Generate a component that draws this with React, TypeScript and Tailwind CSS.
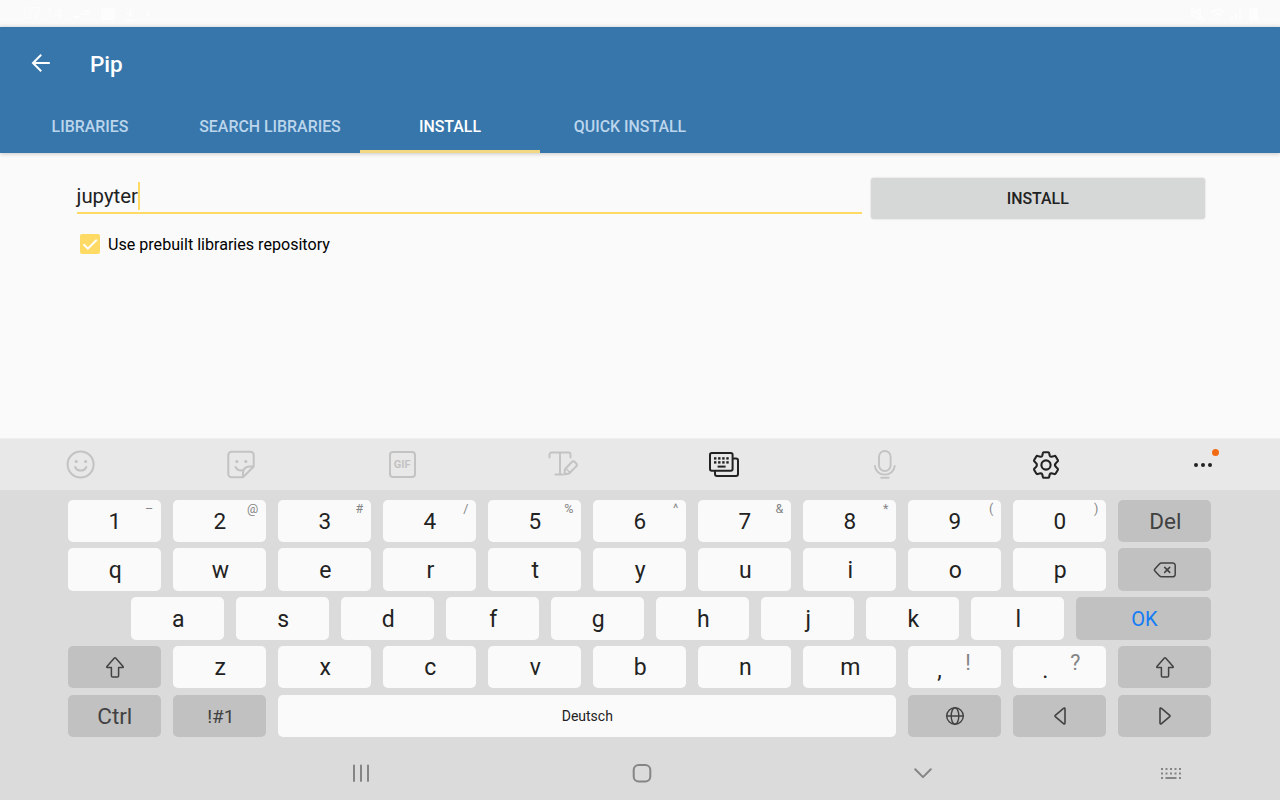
import React from 'react';
import type { ReactNode } from 'react';

const line = {
  fill: 'none',
  stroke: 'currentColor',
  strokeLinecap: 'round' as const,
  strokeLinejoin: 'round' as const,
};

function Icon({ w, h, sw = 2, children }: { w: number; h: number; sw?: number; children: ReactNode }) {
  return (
    <svg width={w} height={h} viewBox={`0 0 ${w} ${h}`} {...line} strokeWidth={sw} className="block shrink-0">
      {children}
    </svg>
  );
}

const Smiley = () => (
  <Icon w={30} h={30}>
    <circle cx="15.600" cy="14.500" r="13" />
    <circle cx="11.2" cy="11.5" r="1.6" fill="currentColor" stroke="none" />
    <circle cx="20.6" cy="11.5" r="1.6" fill="currentColor" stroke="none" />
    <path d="M10.1 17c1 2.3 3 3.6 5.600 3.600s4.600-1.300 5.600-3.600" />
  </Icon>
);

const Sticker = () => (
  <Icon w={30} h={30}>
    <path d="M27.700 16.500V5a3.200 3.200 0 0 0-3.200-3.200H5.500A3.200 3.200 0 0 0 2.300 5v19a3.200 3.200 0 0 0 3.200 3.200H17L27.700 16.500h-4.500a6.200 6.200 0 0 0-6.200 6.200v4.500" />
    <circle cx="10.900" cy="11.500" r="1.600" fill="currentColor" stroke="none" />
    <circle cx="19.800" cy="11.500" r="1.600" fill="currentColor" stroke="none" />
    <path d="M9.500 17c1.200 2.300 3 3.500 5.500 3.500 1 0 1.800-.2 2.600-.6" />
  </Icon>
);

const TextEdit = () => (
  <Icon w={32} h={30}>
    <path d="M2.500 7.500V4.500a2 2 0 0 1 2-2h17a2 2 0 0 1 2 2v3M13 2.500v22M8.500 24.500H16" strokeWidth={1.900} />
    <path d="M17.800 24.300v-4.200c0-.5.200-1 .6-1.400l6.400-6.700c.8-.9 2.200-.9 3 0l1.400 1.400c.8.900.8 2.200 0 3l-6.600 6.600c-.4.400-.8.700-1.400.8z" />
    <path d="M19.200 18.800l3.600 3.700" strokeWidth={1.300} />
  </Icon>
);

const Keyboards = () => (
  <Icon w={32} h={28}>
    <path d="M25.500 7.500h2.500a2 2 0 0 1 2 2V23a2 2 0 0 1-2 2H9a2 2 0 0 1-2-2v-2.500" />
    <rect x="2" y="2" width="22.600" height="17.800" rx="1.800" />
    <g fill="currentColor" stroke="none">
      {[6, 10.1, 14.2, 18.3].map((x) => (
        <g key={x}>
          <rect x={x} y="6.200" width="2.400" height="2.400" />
          <rect x={x} y="10.200" width="2.400" height="2.400" />
        </g>
      ))}
      <rect x="9.600" y="14.600" width="8" height="2" />
    </g>
  </Icon>
);

const Mic = () => (
  <Icon w={24} h={30} sw={1.9}>
    <rect x="6" y="1" width="11.600" height="20" rx="5.800" />
    <path d="M1.900 16c.5 5 4.600 8.600 9.900 8.600s9.400-3.600 9.900-8.600M8.200 27.800h7.400" />
  </Icon>
);

const Gear = () => (
  <Icon w={30} h={30} sw={2.100}>
    <circle cx="15" cy="15" r="4.600" />
    <path d="M12.900 2.200h4.200c.6 0 1 .4 1.100 1l.5 2.300c.2.800.9 1.300 1.700 1.200l3-.7c.6-.2 1 0 1.300.5l2.100 3.500c.3.500.2 1-.2 1.400l-1.800 1.900c-.9.900-.9 2.500 0 3.400l1.800 1.900c.4.400.5.900.2 1.400l-2.100 3.500c-.3.500-.7.700-1.300.5l-3-.7c-.8-.1-1.500.4-1.700 1.200l-.5 2.300c-.1.600-.5 1-1.100 1h-4.200c-.6 0-1-.4-1.100-1l-.5-2.300c-.2-.8-.9-1.300-1.700-1.200l-3 .7c-.6.200-1 0-1.300-.5l-2.100-3.500c-.3-.5-.2-1 .2-1.400l1.800-1.900c.9-.9.900-2.500 0-3.400l-1.800-1.900c-.4-.4-.5-.9-.2-1.400l2.100-3.500c.3-.5.7-.7 1.300-.5l3 .7c.8.100 1.500-.4 1.700-1.200l.5-2.300c.1-.6.500-1 1.100-1z" />
  </Icon>
);

const Shift = () => (
  <Icon w={22} h={24} sw={1.500}>
    <path d="M10.400 3L2.900 11.600c-.4.500-.2.900.4.900h4.100v8.200c0 .9.400 1.300 1.300 1.300h4.600c.9 0 1.300-.4 1.300-1.300v-8.200h4.100c.6 0 .8-.4.400-.9L11.600 3c-.4-.4-.8-.4-1.200 0z" />
  </Icon>
);

const Backspace = () => (
  <Icon w={24} h={18} sw={1.500}>
    <path d="M8.600 2h11.200A2.400 2.400 0 0 1 22.200 4.400v9a2.400 2.400 0 0 1-2.400 2.400H8.600a3 3 0 0 1-2.200-1L1.900 9.900a1.500 1.500 0 0 1 0-2L6.400 3a3 3 0 0 1 2.200-1z" />
    <path d="M11.700 6.400l5 5m0-5l-5 5" />
  </Icon>
);

const Globe = () => (
  <Icon w={20} h={20} sw={1.400}>
    <circle cx="10" cy="10" r="8.300" />
    <ellipse cx="10" cy="10" rx="3.800" ry="8.300" />
    <path d="M1.700 10h16.600" />
  </Icon>
);

const Triangle = () => (
  <Icon w={16} h={20} sw={1.600}>
    <path d="M3.300 10.600l8.200 7c.9.700 1.500.400 1.500-.6V3c0-1-.6-1.300-1.500-.6l-8.200 7c-.4.400-.4.800 0 1.200z" />
  </Icon>
);

function Key({ children, hint, dark = false, size = 'w-[93px]', text = 'text-[23px]' }: {
  children: ReactNode; hint?: string; dark?: boolean; size?: string; text?: string;
}) {
  return (
    <div className={`relative flex h-[42.400px] shrink-0 items-center justify-center rounded-[5px] ${size} ${text} ${dark ? 'bg-[#c1c1c1] text-[#424242]' : 'bg-[#fafafa] text-[#222]'}`}>
      {children}
      {hint && <span className="absolute top-px right-[8px] text-[12.500px] leading-[16px] text-[#858585]">{hint}</span>}
    </div>
  );
}

const Cap = ({ children }: { children: ReactNode }) => <span className="pt-[3px] pl-px">{children}</span>;

function Punctuation({ mark, hint }: { mark: string; hint: string }) {
  return (
    <Key>
      <span className="absolute top-[11px] left-[29px] leading-[28px]">{mark}</span>
      <span className="absolute top-[3px] left-[57px] text-[21.500px] leading-[28px] text-[#858585]">{hint}</span>
    </Key>
  );
}

const numbers = [['1', '–'], ['2', '@'], ['3', '#'], ['4', '/'], ['5', '%'], ['6', '^'], ['7', '&'], ['8', '*'], ['9', '('], ['0', ')']];
const tabs = ['LIBRARIES', 'SEARCH LIBRARIES', 'INSTALL', 'QUICK INSTALL'];

function Slot({ children, dim = false }: { children: ReactNode; dim?: boolean }) {
  return <div className={`flex w-[160.900px] shrink-0 items-center justify-center ${dim ? 'text-[#c3c3c3]' : 'text-[#222]'}`}>{children}</div>;
}

function StatusBar() {
  return (
    <div className="flex h-[27px] items-center justify-between bg-[#fafafa] bg-linear-to-b from-[#fafafa] from-85% to-[#eeeff0] pr-[22px] pl-[23px] text-[#fdfdfd]">
      <div className="flex items-center gap-[10px]">
        <span className="text-[16px] leading-[20px]">07:14</span>
        <Icon w={18} h={12}><path d="M1 9h5M8 6h8M12 3h4" /></Icon>
        <Icon w={14} h={12}><rect x="1" y="1" width="12" height="10" fill="currentColor" /></Icon>
        <Icon w={10} h={14}><path d="M5 1v8M2 6l3 3 3-3M1 13h8" /></Icon>
        <Icon w={6} h={6}><circle cx="3" cy="3" r="1" /></Icon>
      </div>
      <div className="flex items-center gap-[6px]">
        <Icon w={14} h={14}><path d="M1 5h3l5-4v12L4 9H1zM1 1l12 12" /></Icon>
        <Icon w={14} h={14}><path d="M1 5q6-5 12 0M4 8q3-3 6 0M7 11v1" /></Icon>
        <Icon w={12} h={12}><path d="M1 11V9M5 11V6M9 11V2" /></Icon>
        <Icon w={9} h={14}><rect x="1" y="2" width="7" height="11" fill="currentColor" /></Icon>
      </div>
    </div>
  );
}

export default function App() {
  return (
    <div className="flex h-[800px] w-[1280px] flex-col overflow-hidden bg-[#fafafa] font-[Roboto,sans-serif] text-[#222]">
      <StatusBar />
      <header className="h-[126px] shrink-0 bg-[#3776ab] shadow-[0_1px_4px_rgba(0,0,0,0.2)]">
        <div className="flex h-[72px] items-center pl-[30px] text-white">
          <Icon w={22} h={22} sw={2}>
            <path d="M19.800 11H3.200M11.200 2.800L3 11l8.200 8.200" strokeLinecap="butt" strokeLinejoin="miter" />
          </Icon>
          <h1 className="ml-[38px] pt-px text-[22.500px] leading-[28px] font-medium">Pip</h1>
        </div>
        <nav className="flex h-[54px]">
          {tabs.map((t) => (
            <div key={t} className={`flex w-[180px] items-center justify-center border-b-[3px] pt-[5px] text-[15.900px] font-medium ${t === 'INSTALL' ? 'border-[#f2d785] text-white' : 'border-transparent text-[#bbd5ec]'}`}>
              {t}
            </div>
          ))}
        </nav>
      </header>
      <main className="h-[285px] shrink-0 pt-[24.500px] pl-[76.500px]">
        <div className="flex gap-[9px]">
          <div className="flex h-[36.500px] w-[785.500px] items-end border-b-[2px] border-[#ffdb66] pb-[2px]">
            <span className="text-[20.400px] leading-[28px]">jupyter</span>
            <span className="h-[28px] w-[2px] bg-[#ffdb66]" />
          </div>
          <button className="h-[41.500px] w-[333.500px] rounded-[3px] bg-[#d6d8d7] pt-[2px] text-[15.900px] font-medium shadow-[0_0_2px_rgba(0,0,0,0.2)]">INSTALL</button>
        </div>
        <label className="mt-[12px] flex items-center gap-2 pl-[3.500px] text-[16.100px] leading-[24px] text-black">
          <span className="flex h-5 w-5 items-center justify-center rounded-[2px] bg-[#ffdb66] text-white">
            <Icon w={18} h={16} sw={2}><path d="M2.500 8.300l4.400 4.300L15.800 3.700" strokeLinecap="butt" strokeLinejoin="miter" /></Icon>
          </span>
          <span className="pt-[2px]">Use prebuilt libraries repository</span>
        </label>
      </main>
      <section className="flex flex-1 flex-col bg-[#dbdbdb]">
        <div className="flex h-[52px] shrink-0 border-t border-[#efefef] bg-[#e8e8e8]">
          <Slot dim><Smiley /></Slot>
          <Slot dim><Sticker /></Slot>
          <Slot dim>
            <span className="mb-px flex h-[27px] w-[27px] items-center justify-center rounded-[4px] border-2 border-current pt-[2px] text-[11px] font-bold">GIF</span>
          </Slot>
          <Slot dim><TextEdit /></Slot>
          <Slot><Keyboards /></Slot>
          <Slot dim><Mic /></Slot>
          <Slot><Gear /></Slot>
          <div className="flex w-[154px] items-center justify-center">
            <div className="relative">
              <Icon w={20} h={6}>
                {[3, 10, 17].map((x) => <circle key={x} cx={x} cy="3" r="2" fill="currentColor" stroke="none" />)}
              </Icon>
              <span className="absolute -top-[13px] left-[18.500px] h-[7px] w-[7px] rounded-full bg-[#f26b13]" />
            </div>
          </div>
        </div>
        <div className="flex flex-col gap-[6.400px] pt-[9.600px] pl-[68.300px]">
          <div className="flex gap-3">
            {numbers.map(([n, h]) => <Key key={n} hint={h} text="text-[22.500px]"><span className="pt-[3px]">{n}</span></Key>)}
            <Key dark text="text-[22.500px]"><span className="pt-[3px] pl-px">Del</span></Key>
          </div>
          <div className="flex gap-3">
            {'qwertyuiop'.split('').map((c) => <Key key={c}><Cap>{c}</Cap></Key>)}
            <Key dark><Backspace /></Key>
          </div>
          <div className="flex gap-3 pl-[63px]">
            {'asdfghjkl'.split('').map((c) => <Key key={c}><Cap>{c}</Cap></Key>)}
            <Key dark size="w-[135px]" text="text-[20px]"><span className="pt-[2px] pl-px text-[#147cf5]">OK</span></Key>
          </div>
          <div className="flex gap-3">
            <Key dark><Shift /></Key>
            {'zxcvbnm'.split('').map((c) => <Key key={c}><Cap>{c}</Cap></Key>)}
            <Punctuation mark="," hint="!" />
            <Punctuation mark="." hint="?" />
            <Key dark><Shift /></Key>
          </div>
          <div className="flex gap-3">
            <Key dark text="text-[22.500px]"><span className="pt-[2px]">Ctrl</span></Key>
            <Key dark text="text-[19px]"><span className="pt-[2px] pl-[2px]">!#1</span></Key>
            <Key size="w-[618px]" text="text-[14px]"><span className="pt-[2px]">Deutsch</span></Key>
            <Key dark><Globe /></Key>
            <Key dark><Triangle /></Key>
            <Key dark><span className="rotate-180"><Triangle /></span></Key>
          </div>
        </div>
        <div className="flex flex-1 items-center pt-[9px] pl-[220px] text-[#858585]">
          <div className="flex w-[281px] justify-center">
            <Icon w={20} h={20}><path d="M3 2.500v15.400M10 2.500v15.400M17 2.500v15.400" /></Icon>
          </div>
          <div className="flex w-[281px] justify-center">
            <Icon w={20} h={20}><rect x="1.700" y="2" width="16.600" height="16.600" rx="5" /></Icon>
          </div>
          <div className="flex w-[281px] justify-center">
            <Icon w={20} h={20}><path d="M2.200 6.300l7.800 7.800 7.800-7.800" /></Icon>
          </div>
          <div className="ml-[97px]">
            <Icon w={22} h={14}>
              <g fill="currentColor" stroke="none">
                {[1, 5.500, 10, 14.500, 19].map((x) => (
                  <g key={x}>
                    <rect x={x} y="2" width="2" height="2" />
                    <rect x={x} y="6.500" width="2" height="2" />
                  </g>
                ))}
                <rect x="1" y="11" width="2" height="2" />
                <rect x="5.500" y="11" width="11" height="2" />
                <rect x="19" y="11" width="2" height="2" />
              </g>
            </Icon>
          </div>
        </div>
      </section>
    </div>
  );
}
